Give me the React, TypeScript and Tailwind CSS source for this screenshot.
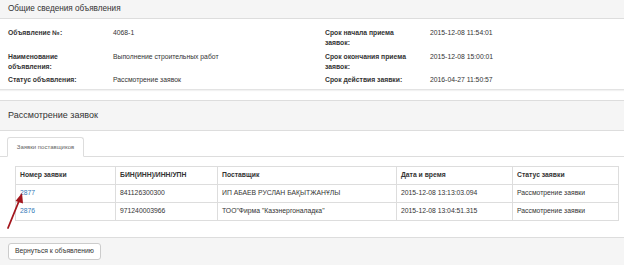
const rows = [
  { num: "2877", bin: "841126300300", supplier: "ИП АБАЕВ РУСЛАН БАҚЫТЖАНҰЛЫ", date: "2015-12-08 13:13:03.094", status: "Рассмотрение заявки" },
  { num: "2876", bin: "971240003966", supplier: "ТОО\"Фирма \"Казэнергоналадка\"", date: "2015-12-08 13:04:51.315", status: "Рассмотрение заявки" },
];

function Field({ label, value }: { label: string; value: string }) {
  return (
    <>
      <div className="pr-[20px] font-bold leading-[10px]">{label}</div>
      <div className="leading-[10px]">{value}</div>
    </>
  );
}

export default function App() {
  return (
    <div className="relative h-[265px] w-[624px] overflow-hidden bg-white text-[6.8px] text-[#333]" style={{ fontFamily: '"Liberation Sans", Arial, sans-serif' }}>
      {/* general info panel */}
      <div className="border-b border-[#e3e3e3] shadow-[0_1px_1px_rgba(0,0,0,0.05)]">
        <div className="flex h-[19px] items-center border-b border-[#ddd] bg-[#f5f5f5] px-2 text-[8.2px]">
          Общие сведения объявления
        </div>
        <div className="grid grid-cols-[105px_212px_105px_1fr] gap-y-[3px] px-2 pt-[8px] pb-[4px]">
          <div className="grid h-[20px] grid-cols-subgrid col-span-2 items-start pt-[1px]">
            <Field label="Объявление №:" value="4068-1" />
          </div>
          <div className="grid grid-cols-[105px_1fr] col-span-2 pt-[1px]">
            <Field label="Срок начала приема заявок:" value="2015-12-08 11:54:01" />
          </div>
          <div className="grid grid-cols-subgrid col-span-2 pt-[1px]">
            <Field label="Наименование объявления:" value="Выполнение строительных работ" />
          </div>
          <div className="grid grid-cols-[105px_1fr] col-span-2 pt-[1px]">
            <Field label="Срок окончания приема заявок:" value="2015-12-08 15:00:01" />
          </div>
          <div className="grid grid-cols-subgrid col-span-2">
            <Field label="Статус объявления:" value="Рассмотрение заявок" />
          </div>
          <div className="grid grid-cols-[105px_1fr] col-span-2">
            <Field label="Срок действия заявки:" value="2016-04-27 11:50:57" />
          </div>
        </div>
      </div>

      {/* applications panel */}
      <div className="mt-[10px] border-t border-[#ddd]">
        <div className="flex h-[30px] items-center border-b border-[#ddd] bg-[#f5f5f5] px-2 text-[9px]">
          Рассмотрение заявок
        </div>
        <div className="pt-[6px]">
          <div className="flex border-b border-[#ddd] pl-[7px]">
            <div className="-mb-px flex h-[20px] w-[77px] items-center justify-center rounded-t-[3px] border border-b-white border-[#ddd] bg-white text-[6px] text-[#666]">
              Заявки поставщиков
            </div>
          </div>
          <div className="px-[15px] pt-[9px] pr-[5px]">
            <table className="w-full border-collapse border border-[#ddd]">
              <colgroup>
                <col className="w-[100px]" />
                <col className="w-[102px]" />
                <col className="w-[179px]" />
                <col className="w-[116px]" />
                <col />
              </colgroup>
              <thead>
                <tr className="h-[18px] text-left font-bold">
                  <th className="border border-[#ddd] px-[4px]">Номер заявки</th>
                  <th className="border border-[#ddd] px-[4px]">БИН(ИНН)/ИНН/УПН</th>
                  <th className="border border-[#ddd] px-[4px]">Поставщик</th>
                  <th className="border border-[#ddd] px-[4px]">Дата и время</th>
                  <th className="border border-[#ddd] px-[4px]">Статус заявки</th>
                </tr>
              </thead>
              <tbody>
                {rows.map((r) => (
                  <tr key={r.num} className="h-[18px]">
                    <td className="border border-[#ddd] px-[4px] text-[#337ab7]">{r.num}</td>
                    <td className="border border-[#ddd] px-[4px]">{r.bin}</td>
                    <td className="border border-[#ddd] px-[4px]">{r.supplier}</td>
                    <td className="border border-[#ddd] px-[4px]">{r.date}</td>
                    <td className="border border-[#ddd] px-[4px]">{r.status}</td>
                  </tr>
                ))}
              </tbody>
            </table>
          </div>
        </div>
        <div className="mt-[16px] border-t border-[#ddd] bg-[#f5f5f5] px-2 pt-[5px] pb-[10px]">
          <button className="h-[17px] rounded-[3px] border border-[#ccc] bg-white px-[6px] text-[6.8px] text-[#333]">
            Вернуться к объявлению
          </button>
        </div>
      </div>

      {/* annotation arrow */}
      <svg className="absolute left-0 top-0" width="624" height="265" viewBox="0 0 624 265">
        <line x1="8" y1="228" x2="19" y2="201" stroke="#a3161d" strokeWidth="1.8" strokeLinecap="round" />
        <polygon points="22,193 15.5,201 23,203.5" fill="#a3161d" />
      </svg>
    </div>
  );
}
